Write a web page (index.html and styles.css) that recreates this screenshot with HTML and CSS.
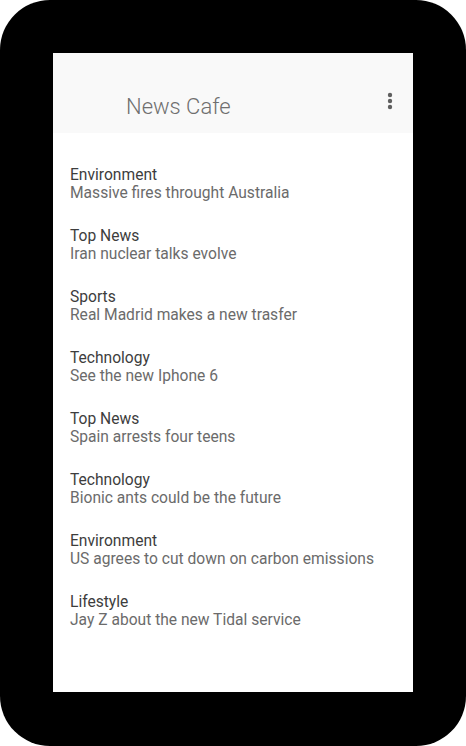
FILE: index.html
```html
<!DOCTYPE html>
<html>
<head>
<meta charset="utf-8">
<link rel="stylesheet" href="styles.css">
</head>
<body>
<div class="device">
  <div class="screen">
    <header class="appbar">
      <h1 class="title">News Cafe</h1>
      <svg class="menu" width="6" height="18" viewBox="0 0 6 18"><circle cx="3" cy="3" r="2.2" fill="#606060"/><circle cx="3" cy="9" r="2.2" fill="#606060"/><circle cx="3" cy="15" r="2.2" fill="#606060"/></svg>
    </header>
    <ul class="list">
      <li class="item"><span class="cat">Environment</span><span class="head">Massive fires throught Australia</span></li>
      <li class="item"><span class="cat">Top News</span><span class="head">Iran nuclear talks evolve</span></li>
      <li class="item"><span class="cat">Sports</span><span class="head">Real Madrid makes a new trasfer</span></li>
      <li class="item"><span class="cat">Technology</span><span class="head">See the new Iphone 6</span></li>
      <li class="item"><span class="cat">Top News</span><span class="head">Spain arrests four teens</span></li>
      <li class="item"><span class="cat">Technology</span><span class="head">Bionic ants could be the future</span></li>
      <li class="item"><span class="cat">Environment</span><span class="head">US agrees to cut down on carbon emissions</span></li>
      <li class="item"><span class="cat">Lifestyle</span><span class="head">Jay Z about the new Tidal service</span></li>
    </ul>
  </div>
</div>
</body>
</html>
```
FILE: styles.css
```css
* { box-sizing: border-box; }
html, body { margin: 0; padding: 0; background: #fff; }
body { font-family: Roboto, "Noto Sans", sans-serif; }
.device {
  width: 466px;
  height: 746px;
  background: #000;
  border-radius: 50px;
  padding: 53px 53px 54px 53px;
}
.screen {
  width: 360px;
  height: 639px;
  background: #fff;
  display: flex;
  flex-direction: column;
}
.appbar {
  height: 80px;
  background: #f9f9f9;
  display: flex;
  align-items: center;
  justify-content: space-between;
  padding: 28px 20px 0 73px;
}
.title {
  margin: 0;
  font-size: 22px;
  font-weight: 300;
  color: #6f6f6f;
  line-height: 26px;
}
.menu { margin-top: -12px; }
.list {
  list-style: none;
  margin: 0;
  padding: 33px 0 0 17px;
  display: flex;
  flex-direction: column;
  gap: 25px;
}
.item { display: flex; flex-direction: column; font-size: 15.6px; line-height: 18px; }
.cat { color: #3d3d3d; }
.head { color: #6b6b6b; }
```
